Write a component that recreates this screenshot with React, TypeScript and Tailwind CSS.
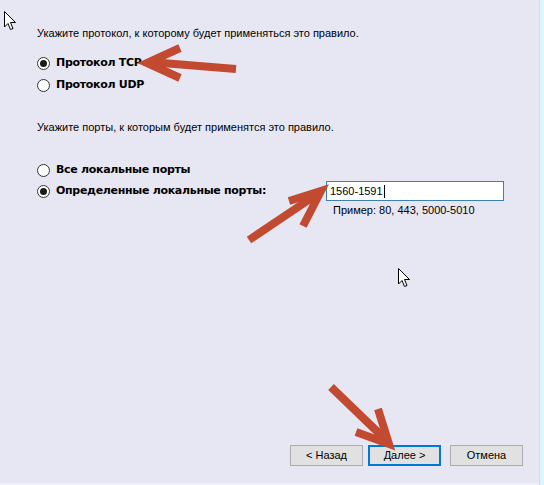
import React from "react";

const Radio = ({ checked }: { checked?: boolean }) => (
    <span className="flex items-center justify-center w-[13px] h-[13px] rounded-full border border-[#333333] bg-white shrink-0">
        {checked && <span className="block w-[7px] h-[7px] rounded-full bg-[#1a1a1a]" />}
    </span>
)

const Cursor = ({ className }: { className: string }) => (
    <svg className={className} width="13" height="20" viewBox="0 0 13 20">
        <path
            d="M0.5 0.5 L0.5 16 L4 12.5 L6.5 18.5 L9 17.5 L6.5 11.5 L11.5 11.5 Z"
            fill="white"
            stroke="black"
            strokeWidth="1"
            strokeLinejoin="miter"
        />
    </svg>
)

const Arrows = () => (
    <svg className="absolute inset-0 pointer-events-none" width="544" height="485">
        <g stroke="#c24a30" strokeWidth="8" fill="none" strokeLinecap="butt" strokeLinejoin="miter">
            <path d="M236 69 L150 62" />
            <path d="M180 48 L147 63 L180 78" />
            <path d="M249 240 L316 195" />
            <path d="M289 201 L321 191 L303 226" />
            <path d="M331 387 L386 440" />
            <path d="M356 432 L389 444 L378 409" />
        </g>
    </svg>
)

const Button = ({ label, primary }: { label: string; primary?: boolean }) => (
    <div
        className={
            "flex items-center justify-center w-[73px] h-[21px] bg-[#e1e1e1] text-[11px] text-black " +
            (primary ? "border-2 border-[#0078d7]" : "border border-[#adadad]")
        }
    >
        {label}
    </div>
)

const Bold = ({ children }: { children: React.ReactNode }) => (
    <span className="text-[11px] font-bold font-['DejaVu_Sans'] tracking-[-0.3px]">{children}</span>
)

export default function App() {
    return (
        <div
            className="relative flex w-[544px] h-[485px] bg-[#e7e7f3] overflow-hidden text-black"
            style={{ fontFamily: '"Liberation Sans", Arial, sans-serif' }}
        >
            <div className="flex flex-col flex-1 border-b-2 border-[#efeff6]">
                <div className="flex flex-col pl-[37px] pt-[26px] flex-1">
                    <p className="text-[11px] leading-[14px]">
                        Укажите протокол, к которому будет применяться это правило.
                    </p>
                    <div className="flex flex-col gap-[8px] mt-[16px]">
                        <label className="flex items-center gap-[6px] h-[14px]">
                            <Radio checked />
                            <Bold>Протокол TCP</Bold>
                        </label>
                        <label className="flex items-center gap-[6px] h-[14px]">
                            <Radio />
                            <Bold>Протокол UDP</Bold>
                        </label>
                    </div>
                    <p className="text-[11px] leading-[14px] mt-[28px]">
                        Укажите порты, к которым будет применятся это правило.
                    </p>
                    <div className="flex flex-col gap-[4px] mt-[29px]">
                        <label className="flex items-center gap-[6px] h-[14px]">
                            <Radio />
                            <Bold>Все локальные порты</Bold>
                        </label>
                        <div className="flex items-center">
                            <label className="flex items-center gap-[6px] h-[14px] w-[289px]">
                                <Radio checked />
                                <Bold>Определенные локальные порты:</Bold>
                            </label>
                            <div className="flex items-center w-[178px] h-[20px] bg-white border border-[#3c7fb1] pl-[3px] text-[11px]">
                                1560-1591<span className="inline-block w-px h-[13px] bg-black ml-px" />
                            </div>
                        </div>
                        <p className="text-[11px] leading-[14px] pl-[296px] -mt-[2px]">
                            Пример: 80, 443, 5000-5010
                        </p>
                    </div>
                </div>
                <div className="flex justify-end pb-[17px] pr-[16px]">
                    <Button label="< Назад" />
                    <div className="w-[5px]" />
                    <Button label="Далее >" primary />
                    <div className="w-[9px]" />
                    <Button label="Отмена" />
                </div>
            </div>
            <div className="w-[5px] border-l border-[#d6d6e6] bg-[#dbf6fc]" />
            <Cursor className="absolute left-[4px] top-[11px]" />
            <Cursor className="absolute left-[398px] top-[268px]" />
            <Arrows />
        </div>
    )
}
